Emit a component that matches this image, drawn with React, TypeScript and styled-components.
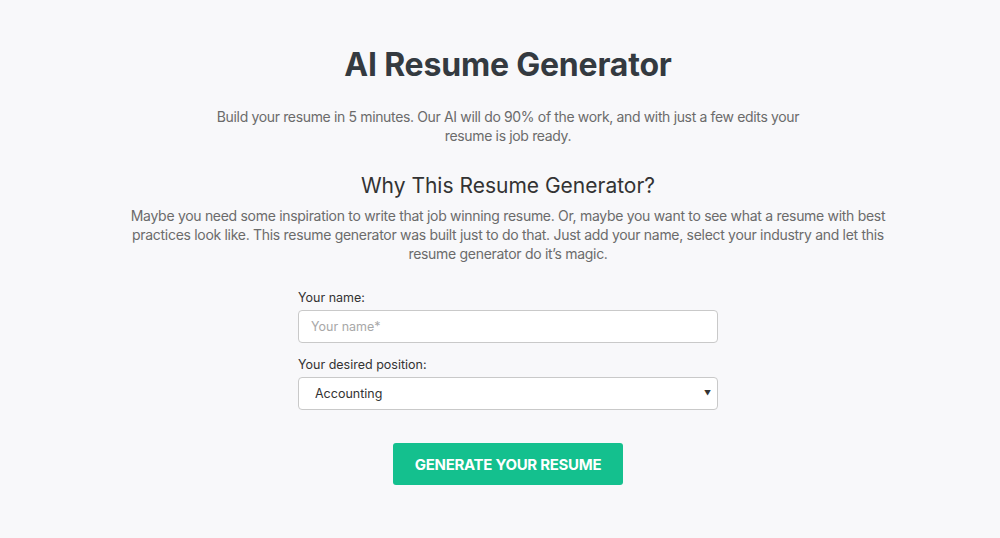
import React from 'react';
import styled, { createGlobalStyle } from 'styled-components';

const GlobalStyle = createGlobalStyle`
  html, body {
    margin: 0;
    padding: 0;
    background-color: #f8f8fa;
    font-family: Inter, "Noto Sans", sans-serif;
    color: #333;
  }
`;

const Page = styled.main`
  display: flex;
  flex-direction: column;
  align-items: center;
  padding: 45px 0 0 16px;
`;

const Title = styled.h1`
  margin: 0;
  font-size: 32px;
  font-weight: 700;
  color: #343a40;
  letter-spacing: -0.2px;
`;

const Lead = styled.p`
  margin: 23px 0 0;
  width: 600px;
  text-align: center;
  font-size: 14px;
  line-height: 19px;
  letter-spacing: -0.35px;
  color: #6b6b6b;
`;

const SubTitle = styled.h2`
  margin: 28px 0 0;
  font-size: 21px;
  font-weight: 400;
  color: #333;
`;

const Text = styled.p`
  margin: 8px 0 0;
  width: 770px;
  text-align: center;
  font-size: 14px;
  line-height: 19px;
  letter-spacing: -0.3px;
  color: #6b6b6b;
`;

const Form = styled.form`
  display: flex;
  flex-direction: column;
  align-items: center;
  width: 420px;
  margin-top: 27px;
`;

const Field = styled.div`
  display: flex;
  flex-direction: column;
  width: 100%;
  margin-bottom: 14px;
`;

const Label = styled.label`
  font-size: 12.5px;
  color: #333;
  margin-bottom: 5px;
`;

const Input = styled.input`
  box-sizing: border-box;
  height: 33px;
  width: 100%;
  padding: 0 12px;
  border: 1px solid #c9c9c9;
  border-radius: 4px;
  background: #fff;
  font-family: inherit;
  font-size: 12.5px;
  color: #333;

  &::placeholder {
    color: #a8a8a8;
  }
`;

const SelectWrap = styled.div`
  position: relative;
  width: 100%;
`;

const Select = styled.select`
  box-sizing: border-box;
  appearance: none;
  height: 33px;
  width: 100%;
  padding: 0 16px;
  border: 1px solid #c9c9c9;
  border-radius: 4px;
  background: #fff;
  font-family: inherit;
  font-size: 12.5px;
  color: #333;
`;

const Caret = styled.span`
  position: absolute;
  right: 7px;
  top: 50%;
  transform: translateY(-55%);
  font-size: 7px;
  color: #333;
  pointer-events: none;
`;

const Button = styled.button`
  margin-top: 19px;
  width: 230px;
  height: 42px;
  border: none;
  border-radius: 3px;
  background-color: #14c08e;
  color: #fff;
  font-family: inherit;
  font-size: 15px;
  font-weight: 700;
  letter-spacing: -0.3px;
  text-transform: uppercase;
  cursor: pointer;
`;

const App: React.FC = () => {
  return (
    <>
      <GlobalStyle />
      <Page>
        <Title>AI Resume Generator</Title>
        <Lead>
          Build your resume in 5 minutes. Our AI will do 90% of the work, and with just a few edits your
          resume is job ready.
        </Lead>
        <SubTitle>Why This Resume Generator?</SubTitle>
        <Text>
          Maybe you need some inspiration to write that job winning resume. Or, maybe you want to see what a resume with best
          practices look like. This resume generator was built just to do that. Just add your name, select your industry and let this
          resume generator do it’s magic.
        </Text>
        <Form onSubmit={e => e.preventDefault()}>
          <Field>
            <Label htmlFor="name">Your name:</Label>
            <Input id="name" placeholder="Your name*" />
          </Field>
          <Field>
            <Label htmlFor="position">Your desired position:</Label>
            <SelectWrap>
              <Select id="position" defaultValue="Accounting">
                <option>Accounting</option>
                <option>Engineering</option>
                <option>Marketing</option>
              </Select>
              <Caret>▼</Caret>
            </SelectWrap>
          </Field>
          <Button type="submit">Generate your resume</Button>
        </Form>
      </Page>
    </>
  );
};

export default App;
